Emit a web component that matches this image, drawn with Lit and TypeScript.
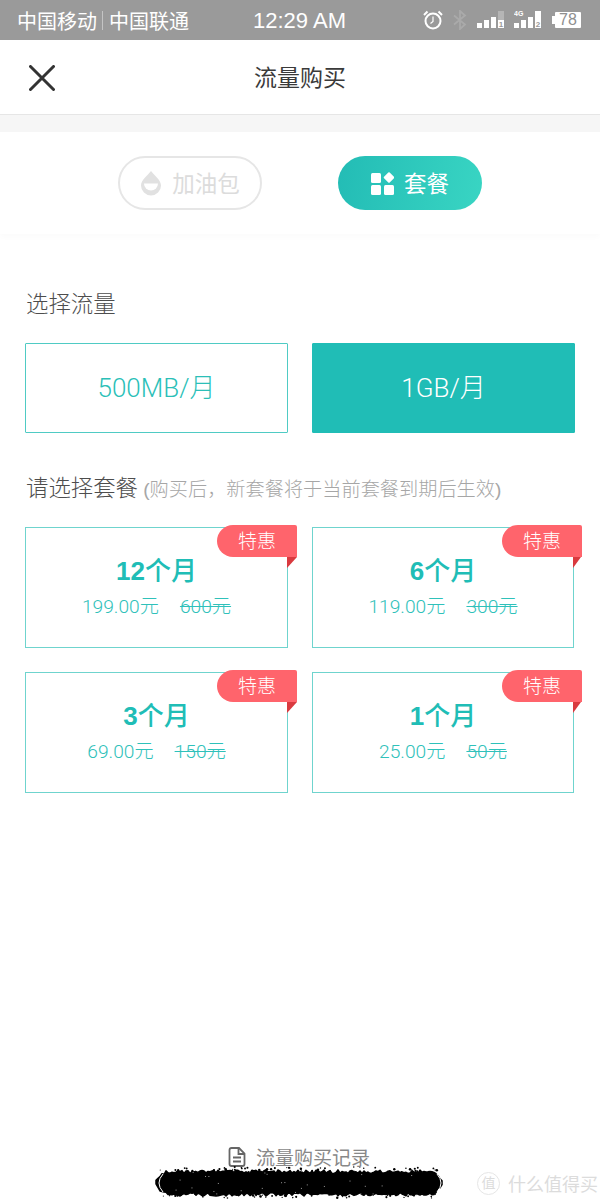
import { LitElement, css, html, svg } from 'lit';
import { customElement } from 'lit/decorators.js';

const PLANS = [
  { months: '12', price: '199.00元', old: '600元' },
  { months: '6', price: '119.00元', old: '300元' },
  { months: '3', price: '69.00元', old: '150元' },
  { months: '1', price: '25.00元', old: '50元' },
];

const rand = (i: number) => {
  const v = Math.sin(i * 12.9898) * 43758.5453;
  return v - Math.floor(v);
};

// rough marker scribble over the bottom bar, fixed pseudo-random edge
function scribblePath() {
  const pts: string[] = [];
  const end = (x: number) => {
    const d = Math.min(x - 2, 288 - x);
    return d < 12 ? (12 - d) * (12 - d) * 0.07 : 0;
  };
  for (let x = 2; x <= 288; x += 2) {
    pts.push(`${x},${5 + end(x) + rand(x) * 3.500}`);
  }
  for (let x = 288; x >= 2; x -= 2) {
    pts.push(`${x},${31 - end(x) - rand(x + 1) * 3.500}`);
  }
  return pts.join(' ');
}

// specks along the edge of the scribble
const SPECKS = Array.from({ length: 110 }, (_, i) => ({
  x: 6 + rand(i + 500) * 278,
  y: i % 2 ? 2 + rand(i + 900) * 5 : 28 + rand(i + 900) * 5,
  r: 0.5 + rand(i + 1300) * 0.8,
}));

// small white flecks inside it
const FLECKS = Array.from({ length: 26 }, (_, i) => ({
  x: 14 + rand(i + 70) * 262,
  y: 7 + rand(i + 170) * 22,
}));

@customElement('app-root')
export class AppRoot extends LitElement {
  render() {
    return html`
      <div class="page">
        <div class="status">
          <div class="carrier">
            <span>中国移动</span><i></i><span>中国联通</span>
          </div>
          <div class="time">12:29 AM</div>
          <div class="status-icons">
            ${this.alarmIcon()} ${this.btIcon()} ${this.signalIcon('1', false)} ${this.signalIcon('2', true)}
            <div class="battery"><b></b><span>78</span></div>
          </div>
        </div>
        <div class="nav">
          <svg class="close" width="26" height="26" viewBox="0 0 26 26">
            <path d="M1.500 1.500 24.500 24.500M24.500 1.500 1.500 24.500" stroke="#333" stroke-width="3" stroke-linecap="round" fill="none"></path>
          </svg>
          <div class="nav-title">流量购买</div>
        </div>
        <div class="strip"></div>
        <div class="tabs">
          <div class="tab off">${this.dropIcon()}<span>加油包</span></div>
          <div class="tab on">${this.gridIcon()}<span>套餐</span></div>
        </div>
        <div class="content">
          <div class="heading first">选择流量</div>
          <div class="sizes">
            <div class="size">500MB/月</div>
            <div class="size active">1GB/月</div>
          </div>
          <div class="heading second">请选择套餐 <small>(购买后，新套餐将于当前套餐到期后生效)</small></div>
          <div class="plans">
            ${PLANS.map(
              (p) => html`
                <div class="plan">
                  <div class="ribbon">特惠</div>
                  <div class="fold"></div>
                  <div class="months"><b>${p.months}</b>个月</div>
                  <div class="prices"><span>${p.price}</span><s>${p.old}</s></div>
                </div>
              `,
            )}
          </div>
        </div>
        <div class="footer">
          <svg width="18" height="20" viewBox="0 0 18 20" fill="none" stroke="#666" stroke-width="1.800">
            <path d="M1.500 3 Q1.500 1 3.500 1H11L16.500 6.500V17Q16.500 19 14.500 19H3.500Q1.500 19 1.500 17Z"></path>
            <path d="M10.500 1.500V7H16M5 10.500H13M5 14.500H13"></path>
          </svg>
          <span>流量购买记录</span>
        </div>
        <svg class="scribble" width="292" height="36" viewBox="0 0 292 36">
          <polygon points=${scribblePath()} fill="#000" stroke="#000" stroke-width="1.500" stroke-linejoin="round"></polygon>
          ${SPECKS.map((s) => svg`<circle cx=${s.x} cy=${s.y} r=${s.r} fill="#000"></circle>`)}
          ${FLECKS.map((f) => svg`<rect x=${f.x} y=${f.y} width="1" height="1" fill="#999"></rect>`)}
          <path d="M283 9Q291 18 283 27" stroke="#fff" stroke-width="1" fill="none"></path>
          <path d="M9 9Q1 18 9 27" stroke="#fff" stroke-width="1" fill="none"></path>
        </svg>
        <div class="watermark"><em>值</em><span>什么值得买</span></div>
      </div>
    `;
  }

  private alarmIcon() {
    return html`<svg width="20" height="20" viewBox="0 0 20 20" fill="none" stroke="#fff">
      <circle cx="10" cy="11" r="7.500" stroke-width="2"></circle>
      <path d="M10 6.500V11.500L7.500 13.500" stroke-width="1.200"></path>
      <path d="M1 5 4.500 1.500M19 5 15.500 1.500" stroke-width="2"></path>
    </svg>`;
  }

  private btIcon() {
    return html`<svg class="bt" width="14" height="20" viewBox="0 0 14 20" fill="none" stroke="#aaa" stroke-width="1.800">
      <path d="M1 5.500 12 14.500 7 19V1L12 5.500 1 14.500"></path>
    </svg>`;
  }

  private signalIcon(sim: string, lte: boolean) {
    const bars = [
      [0, 13, 5, 5],
      [7, 10, 5, 8],
      [14, 7, 5, 11],
    ];
    return html`<svg class="signal" width="28" height="20" viewBox="0 0 28 20">
      ${bars.map((b) => svg`<rect x=${b[0]} y=${b[1]} width=${b[2]} height=${b[3]} fill="#fff"></rect>`)}
      <rect x="21" y="1" width="6" height="9" fill=${lte ? '#fff' : '#b5b5b5'}></rect>
      <rect x="21" y="10" width="6" height="8" fill="#fff"></rect>
      <text x="24" y="17" font-size="8" font-weight="700" text-anchor="middle" fill="#999" font-family="Liberation Sans">${sim}</text>
      ${lte ? svg`<text x="0" y="6" font-size="7" font-weight="700" fill="#fff" font-family="Liberation Sans">4G</text>` : ''}
    </svg>`;
  }

  private dropIcon() {
    return html`<svg width="22" height="26" viewBox="0 0 22 26">
      <path d="M11 1C14 5 21 10 21 15.500A10 10 0 0 1 1 15.500C1 10 8 5 11 1Z" fill="#e1e1e1"></path>
      <path d="M4 13.500H18A7 7 0 0 1 4 13.500Z" fill="#fff"></path>
    </svg>`;
  }

  private gridIcon() {
    return html`<svg width="23" height="23" viewBox="0 0 23 23" fill="#fff">
      <rect x="0" y="1" width="10" height="10" rx="1.500"></rect>
      <rect x="0" y="13" width="10" height="10" rx="1.500"></rect>
      <rect x="13" y="13" width="10" height="10" rx="1.500"></rect>
      <rect x="14" y="1.500" width="8" height="8" rx="1" transform="rotate(45 18 5.500)"></rect>
    </svg>`;
  }

  static styles = css`
    :host {
      display: block;
      font-family: 'Liberation Sans', 'Noto Sans CJK SC', sans-serif;
    }
    .page {
      position: relative;
      width: 600px;
      height: 1200px;
      background: #fff;
      overflow: hidden;
    }
    .status {
      height: 40px;
      background: #9a9a9a;
      color: #fff;
      position: relative;
      display: flex;
      align-items: center;
      justify-content: space-between;
      padding: 0 19px 0 17px;
    }
    .carrier {
      display: flex;
      align-items: center;
      font-size: 20px;
    }
    .carrier i {
      width: 1px;
      height: 19px;
      background: #c4c4c4;
      margin: 0 6px 0 5px;
    }
    .time {
      position: absolute;
      left: 253px;
      top: 8px;
      font-size: 22px;
      line-height: 26px;
    }
    .status-icons {
      display: flex;
      align-items: center;
    }
    .bt {
      margin-left: 10px;
    }
    .signal {
      margin-left: 10px;
    }
    .signal:nth-of-type(4) {
      margin-left: 9px;
    }
    .battery {
      margin-left: 13px;
      position: relative;
      width: 26px;
      height: 16px;
      background: #fff;
      border-radius: 1px;
      color: #8f8f8f;
      font-size: 16px;
      line-height: 16px;
      text-align: center;
    }
    .battery b {
      position: absolute;
      left: -3px;
      top: 4px;
      width: 3px;
      height: 8px;
      background: #fff;
    }
    .nav {
      height: 74px;
      position: relative;
      display: flex;
      align-items: center;
      justify-content: center;
      border-bottom: 1px solid #e6e6e6;
    }
    .close {
      position: absolute;
      left: 29px;
      top: 25px;
    }
    .nav-title {
      font-size: 23px;
      color: #3a3a3a;
      padding-bottom: 2px;
    }
    .strip {
      height: 17px;
      background: #f6f6f6;
    }
    .tabs {
      height: 102px;
      display: flex;
      justify-content: center;
      align-items: center;
      gap: 76px;
      box-shadow: 0 3px 6px rgba(0, 0, 0, 0.02);
    }
    .tab {
      box-sizing: border-box;
      width: 144px;
      height: 54px;
      border-radius: 27px;
      display: flex;
      align-items: center;
      justify-content: center;
      gap: 10px;
      font-size: 22.500px;
    }
    .tab span {
      padding-bottom: 2px;
    }
    .tab.off {
      border: 2px solid #e6e6e6;
      color: #dcdcdc;
    }
    .tab.on {
      background: linear-gradient(100deg, #23bcb5, #39d5c3);
      color: #fff;
    }
    .content {
      padding: 0 25px;
    }
    .heading {
      font-size: 22.400px;
      color: #4d4d4d;
      line-height: 30px;
      padding-left: 1px;
      font-weight: 300;
    }
    .heading.first {
      margin-top: 56px;
    }
    .heading.second {
      margin-top: 41px;
    }
    .heading small {
      font-size: 19.200px;
      color: #a6a6a6;
      margin-left: -1px;
    }
    .sizes {
      margin-top: 23px;
      display: grid;
      grid-template-columns: 263px 263px;
      gap: 24px;
    }
    .size {
      box-sizing: border-box;
      height: 90px;
      border: 1px solid #4fcbc4;
      border-radius: 1px;
      color: #2bbfb8;
      font-family: Roboto, 'Noto Sans CJK SC', sans-serif;
      font-weight: 300;
      font-size: 26px;
      display: flex;
      align-items: center;
      justify-content: center;
      padding-bottom: 6px;
    }
    .size.active {
      background: #20bdb6;
      border-color: #20bdb6;
      color: #fff;
    }
    .plans {
      margin-top: 22px;
      display: grid;
      grid-template-columns: 263px 262px;
      gap: 24px;
    }
    .plan {
      box-sizing: border-box;
      height: 121px;
      border: 1px solid #6fd4ce;
      position: relative;
      text-align: center;
    }
    .ribbon {
      position: absolute;
      right: -10px;
      top: -3px;
      width: 80px;
      height: 32px;
      background: #ff646c;
      color: #fff;
      border-radius: 16px 2px 0 16px;
      font-size: 19px;
      line-height: 34px;
      font-weight: 300;
    }
    .fold {
      position: absolute;
      right: -10px;
      top: 29px;
      width: 0;
      height: 0;
      border-top: 11px solid #d93a3f;
      border-right: 10px solid transparent;
    }
    .plan:nth-child(even) .ribbon {
      right: -9px;
    }
    .plan:nth-child(even) .fold {
      right: -8px;
      border-right-width: 8px;
    }
    .months {
      margin-top: 26px;
      font-size: 26px;
      font-weight: 500;
      color: #20bdb6;
      line-height: 34px;
    }
    .months b {
      font-weight: 700;
    }
    .prices {
      margin-top: 7px;
      font-family: Roboto, 'Noto Sans CJK SC', sans-serif;
      font-weight: 300;
      font-size: 19.200px;
      line-height: 24px;
      color: #2fc1ba;
    }
    .prices s {
      margin-left: 21px;
    }
    .footer {
      position: absolute;
      left: 228px;
      top: 1143px;
      display: flex;
      align-items: center;
      gap: 10px;
      font-size: 19px;
      color: #888;
    }
    .scribble {
      position: absolute;
      left: 154px;
      top: 1165px;
    }
    .watermark {
      position: absolute;
      left: 477px;
      top: 1170px;
      display: flex;
      align-items: center;
      gap: 8px;
      color: #dcdcdc;
      font-size: 18px;
    }
    .watermark em {
      font-style: normal;
      width: 21px;
      height: 21px;
      border: 1px solid #e6e6e6;
      border-radius: 50%;
      font-size: 14px;
      line-height: 21px;
      text-align: center;
    }
  `;
}
